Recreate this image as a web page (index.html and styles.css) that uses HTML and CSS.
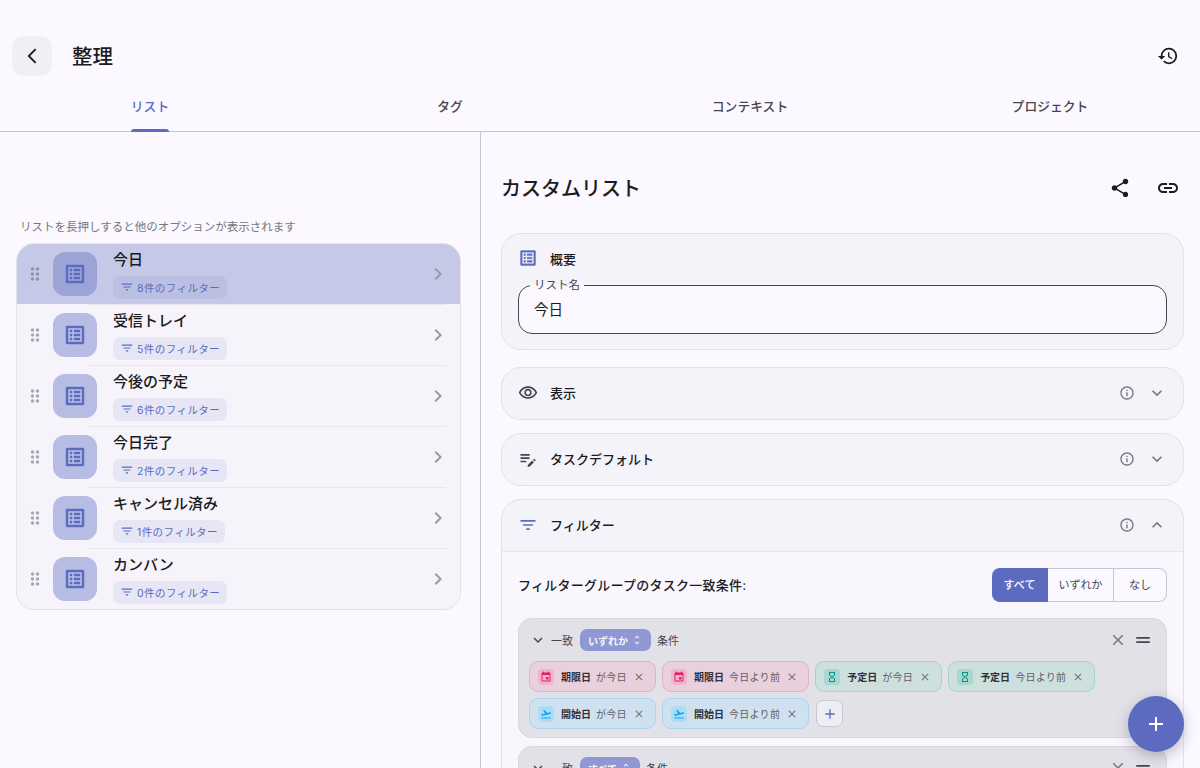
FILE: index.html
```html
<!DOCTYPE html>
<html lang="ja">
<head>
<meta charset="utf-8">
<title>整理</title>
<link rel="stylesheet" href="styles.css">
</head>
<body>
<svg class="defs" aria-hidden="true">
  <symbol id="i-history" viewBox="0 0 24 24"><path d="M13 3a9 9 0 0 0-9 9H1l3.89 3.89.07.14L9 12H6c0-3.87 3.13-7 7-7s7 3.13 7 7-3.13 7-7 7c-1.93 0-3.68-.79-4.94-2.06l-1.42 1.42A8.954 8.954 0 0 0 13 21a9 9 0 0 0 0-18zm-1 5v5l4.28 2.54.72-1.21-3.5-2.08V8H12z"/></symbol>
  <symbol id="i-back" viewBox="0 0 24 24"><path d="M17.77 3.77 16 2 6 12l10 10 1.77-1.77L9.54 12z"/></symbol>
  <symbol id="i-share" viewBox="0 0 24 24"><path d="M18 16.08c-.76 0-1.44.3-1.96.77L8.91 12.7c.05-.23.09-.46.09-.7s-.04-.47-.09-.7l7.05-4.11c.54.5 1.25.81 2.04.81 1.66 0 3-1.34 3-3s-1.34-3-3-3-3 1.34-3 3c0 .24.04.47.09.7L8.04 9.81C7.5 9.31 6.79 9 6 9c-1.66 0-3 1.34-3 3s1.34 3 3 3c.79 0 1.5-.31 2.04-.81l7.12 4.16c-.05.21-.08.43-.08.65 0 1.61 1.31 2.92 2.92 2.92s2.92-1.31 2.92-2.92-1.31-2.92-2.92-2.92z"/></symbol>
  <symbol id="i-link" viewBox="0 0 24 24"><path d="M3.9 12c0-1.71 1.39-3.1 3.1-3.1h4V7H7c-2.76 0-5 2.24-5 5s2.24 5 5 5h4v-1.9H7c-1.71 0-3.1-1.39-3.1-3.1zM8 13h8v-2H8v2zm9-6h-4v1.9h4c1.71 0 3.1 1.39 3.1 3.1s-1.39 3.1-3.1 3.1h-4V17h4c2.76 0 5-2.24 5-5s-2.24-5-5-5z"/></symbol>
  <symbol id="i-list" viewBox="0 0 24 24"><path d="M19 5v14H5V5h14m1.1-2H3.9c-.5 0-.9.4-.9.9v16.2c0 .4.4.9.9.9h16.2c.4 0 .9-.5.9-.9V3.9c0-.5-.5-.9-.9-.9zM11 7h6v2h-6V7zm0 4h6v2h-6v-2zm0 4h6v2h-6zM7 7h2v2H7zm0 4h2v2H7zm0 4h2v2H7z"/></symbol>
  <symbol id="i-eye" viewBox="0 0 24 24"><path d="M12 6c3.79 0 7.17 2.13 8.82 5.5C19.17 14.87 15.79 17 12 17s-7.17-2.13-8.82-5.5C4.83 8.13 8.21 6 12 6m0-2C7 4 2.73 7.11 1 11.5 2.73 15.89 7 19 12 19s9.27-3.11 11-7.5C21.27 7.11 17 4 12 4zm0 5c1.38 0 2.5 1.12 2.5 2.5S13.38 14 12 14s-2.5-1.12-2.5-2.5S10.62 9 12 9m0-2c-2.48 0-4.5 2.02-4.5 4.5S9.52 16 12 16s4.5-2.02 4.5-4.5S14.48 7 12 7z"/></symbol>
  <symbol id="i-note" viewBox="0 0 24 24"><path d="M3 10h11v2H3v-2zm0-2h11V6H3v2zm0 8h7v-2H3v2zm15.01-3.13.71-.71c.39-.39 1.02-.39 1.41 0l.71.71c.39.39.39 1.02 0 1.41l-.71.71-2.12-2.12zm-1.06 1.06-5.3 5.31V21.36h2.12l5.3-5.3-2.12-2.13z"/></symbol>
  <symbol id="i-filter" viewBox="0 0 24 24"><path d="M10 18h4v-2h-4v2zM3 6v2h18V6H3zm3 7h12v-2H6v2z"/></symbol>
  <symbol id="i-info" viewBox="0 0 24 24"><path d="M11 7h2v2h-2zm0 4h2v6h-2zm1-9C6.48 2 2 6.48 2 12s4.48 10 10 10 10-4.48 10-10S17.52 2 12 2zm0 18c-4.41 0-8-3.59-8-8s3.59-8 8-8 8 3.59 8 8-3.59 8-8 8z"/></symbol>
  <symbol id="i-down" viewBox="0 0 24 24"><path d="M16.59 8.59 12 13.17 7.41 8.59 6 10l6 6 6-6z"/></symbol>
  <symbol id="i-up" viewBox="0 0 24 24"><path d="M12 8l-6 6 1.41 1.41L12 10.83l4.59 4.58L18 14z"/></symbol>
  <symbol id="i-right" viewBox="0 0 24 24"><path d="M10 6 8.59 7.41 13.17 12l-4.58 4.59L10 18l6-6z"/></symbol>
  <symbol id="i-drag" viewBox="0 0 24 24"><path d="M11 18c0 1.1-.9 2-2 2s-2-.9-2-2 .9-2 2-2 2 .9 2 2zm-2-8c-1.1 0-2 .9-2 2s.9 2 2 2 2-.9 2-2-.9-2-2-2zm0-6c-1.1 0-2 .9-2 2s.9 2 2 2 2-.9 2-2-.9-2-2-2zm6 4c1.1 0 2-.9 2-2s-.9-2-2-2-2 .9-2 2 .9 2 2 2zm0 2c-1.1 0-2 .9-2 2s.9 2 2 2 2-.9 2-2-.9-2-2-2zm0 6c-1.1 0-2 .9-2 2s.9 2 2 2 2-.9 2-2-.9-2-2-2z"/></symbol>
  <symbol id="i-close" viewBox="0 0 24 24"><path d="M19 6.41 17.59 5 12 10.59 6.41 5 5 6.41 10.59 12 5 17.59 6.41 19 12 13.41 17.59 19 19 17.59 13.41 12z"/></symbol>
  <symbol id="i-add" viewBox="0 0 24 24"><path d="M19 13h-6v6h-2v-6H5v-2h6V5h2v6h6v2z"/></symbol>
  <symbol id="i-event" viewBox="0 0 24 24"><path d="M17 12h-5v5h5v-5zM16 1v2H8V1H6v2H5c-1.11 0-1.99.9-1.99 2L3 19c0 1.1.89 2 2 2h14c1.1 0 2-.9 2-2V5c0-1.1-.9-2-2-2h-1V1h-2zm3 18H5V8h14v11z"/></symbol>
  <symbol id="i-hour" viewBox="0 0 24 24"><path d="M6 2v6h.01L6 8.01 10 12l-4 4 .01.01H6V22h12v-5.99h-.01L18 16l-4-4 4-3.99-.01-.01H18V2H6zm10 14.5V20H8v-3.5l4-4 4 4zm-4-5-4-4V4h8v3.5l-4 4z"/></symbol>
  <symbol id="i-flight" viewBox="0 0 24 24"><path d="M2.5 19h19v2h-19v-2zm19.57-9.36c-.21-.8-1.04-1.28-1.84-1.06L14.92 10l-6.9-6.43-1.93.51 4.14 7.17-4.97 1.33-1.97-1.54-1.45.39 2.59 4.49s7.12-1.9 16.57-4.43c.81-.23 1.28-1.05 1.07-1.85z"/></symbol>
  <symbol id="i-unfold" viewBox="0 0 24 24"><path d="M12 5.83 15.17 9l1.41-1.41L12 3 7.41 7.59 8.83 9 12 5.83zm0 12.34L8.83 15l-1.41 1.41L12 21l4.59-4.59L15.17 15 12 18.17z"/></symbol>
  <symbol id="i-equal" viewBox="0 0 24 24"><path d="M3 8h18v2.4H3zM3 13.6h18V16H3z"/></symbol>
</svg>

<div class="app">
  <header class="topbar">
    <button class="back" type="button"><svg class="ic ic-18"><use href="#i-back"/></svg></button>
    <h1 class="page-title">整理</h1>
    <svg class="ic ic-22"><use href="#i-history"/></svg>
  </header>

  <nav class="tabs">
    <div class="tab active"><span class="tab-label">リスト</span></div>
    <div class="tab"><span class="tab-label">タグ</span></div>
    <div class="tab"><span class="tab-label">コンテキスト</span></div>
    <div class="tab"><span class="tab-label">プロジェクト</span></div>
  </nav>

  <main class="split">
    <section class="left">
      <p class="hint">リストを長押しすると他のオプションが表示されます</p>
      <div class="lists">
        <div class="row selected">
          <svg class="ic drag"><use href="#i-drag"/></svg>
          <div class="tile"><svg class="ic ic-24 bold"><use href="#i-list"/></svg></div>
          <div class="row-text"><div class="row-name">今日</div><div class="count"><svg class="ic ic-14"><use href="#i-filter"/></svg>8件のフィルター</div></div>
          <svg class="ic ic-24 go"><use href="#i-right"/></svg>
        </div>
        <div class="row">
          <svg class="ic drag"><use href="#i-drag"/></svg>
          <div class="tile"><svg class="ic ic-24 bold"><use href="#i-list"/></svg></div>
          <div class="row-text"><div class="row-name">受信トレイ</div><div class="count"><svg class="ic ic-14"><use href="#i-filter"/></svg>5件のフィルター</div></div>
          <svg class="ic ic-24 go"><use href="#i-right"/></svg>
        </div>
        <div class="row">
          <svg class="ic drag"><use href="#i-drag"/></svg>
          <div class="tile"><svg class="ic ic-24 bold"><use href="#i-list"/></svg></div>
          <div class="row-text"><div class="row-name">今後の予定</div><div class="count"><svg class="ic ic-14"><use href="#i-filter"/></svg>6件のフィルター</div></div>
          <svg class="ic ic-24 go"><use href="#i-right"/></svg>
        </div>
        <div class="row">
          <svg class="ic drag"><use href="#i-drag"/></svg>
          <div class="tile"><svg class="ic ic-24 bold"><use href="#i-list"/></svg></div>
          <div class="row-text"><div class="row-name">今日完了</div><div class="count"><svg class="ic ic-14"><use href="#i-filter"/></svg>2件のフィルター</div></div>
          <svg class="ic ic-24 go"><use href="#i-right"/></svg>
        </div>
        <div class="row">
          <svg class="ic drag"><use href="#i-drag"/></svg>
          <div class="tile"><svg class="ic ic-24 bold"><use href="#i-list"/></svg></div>
          <div class="row-text"><div class="row-name">キャンセル済み</div><div class="count"><svg class="ic ic-14"><use href="#i-filter"/></svg>1件のフィルター</div></div>
          <svg class="ic ic-24 go"><use href="#i-right"/></svg>
        </div>
        <div class="row">
          <svg class="ic drag"><use href="#i-drag"/></svg>
          <div class="tile"><svg class="ic ic-24 bold"><use href="#i-list"/></svg></div>
          <div class="row-text"><div class="row-name">カンバン</div><div class="count"><svg class="ic ic-14"><use href="#i-filter"/></svg>0件のフィルター</div></div>
          <svg class="ic ic-24 go"><use href="#i-right"/></svg>
        </div>
      </div>
    </section>

    <section class="right">
      <div class="right-head">
        <h2 class="right-title">カスタムリスト</h2>
        <svg class="ic ic-22"><use href="#i-share"/></svg>
        <svg class="ic ic-24"><use href="#i-link"/></svg>
      </div>

      <div class="card overview">
        <div class="overview-head">
          <svg class="ic ic-20 indigo bold"><use href="#i-list"/></svg>
          <span class="card-name">概要</span>
        </div>
        <fieldset class="field">
          <legend class="field-label">リスト名</legend>
          <div class="field-value">今日</div>
        </fieldset>
      </div>

      <div class="card">
        <div class="card-head">
          <svg class="ic ic-20 dark"><use href="#i-eye"/></svg>
          <span class="card-name">表示</span>
          <svg class="ic ic-16 muted"><use href="#i-info"/></svg>
          <svg class="ic ic-20 muted chev"><use href="#i-down"/></svg>
        </div>
      </div>

      <div class="card">
        <div class="card-head">
          <svg class="ic ic-20 dark"><use href="#i-note"/></svg>
          <span class="card-name">タスクデフォルト</span>
          <svg class="ic ic-16 muted"><use href="#i-info"/></svg>
          <svg class="ic ic-20 muted chev"><use href="#i-down"/></svg>
        </div>
      </div>

      <div class="card">
        <div class="card-head divided">
          <svg class="ic ic-20 indigo"><use href="#i-filter"/></svg>
          <span class="card-name">フィルター</span>
          <svg class="ic ic-16 muted"><use href="#i-info"/></svg>
          <svg class="ic ic-20 muted chev"><use href="#i-up"/></svg>
        </div>
        <div class="filter-body">
          <div class="match-row">
            <span class="match-label">フィルターグループのタスク一致条件:</span>
            <div class="segments">
              <span class="segment on">すべて</span>
              <span class="segment mid">いずれか</span>
              <span class="segment last">なし</span>
            </div>
          </div>

          <div class="group">
            <div class="group-head">
              <svg class="ic ic-18 dark"><use href="#i-down"/></svg>
              <span class="group-word">一致</span>
              <span class="pill">いずれか<svg class="ic ic-12"><use href="#i-unfold"/></svg></span>
              <span class="group-word gap">条件</span>
              <svg class="ic ic-18 muted push"><use href="#i-close"/></svg>
              <svg class="ic ic-18 dark"><use href="#i-equal"/></svg>
            </div>
            <div class="chips">
              <div class="chip pink"><span class="chip-ic"><svg class="ic ic-12"><use href="#i-event"/></svg></span><b>期限日</b><span class="chip-v">が今日</span><svg class="ic ic-12 x"><use href="#i-close"/></svg></div>
              <div class="chip pink"><span class="chip-ic"><svg class="ic ic-12"><use href="#i-event"/></svg></span><b>期限日</b><span class="chip-v">今日より前</span><svg class="ic ic-12 x"><use href="#i-close"/></svg></div>
              <div class="chip teal"><span class="chip-ic"><svg class="ic ic-12"><use href="#i-hour"/></svg></span><b>予定日</b><span class="chip-v">が今日</span><svg class="ic ic-12 x"><use href="#i-close"/></svg></div>
              <div class="chip teal"><span class="chip-ic"><svg class="ic ic-12"><use href="#i-hour"/></svg></span><b>予定日</b><span class="chip-v">今日より前</span><svg class="ic ic-12 x"><use href="#i-close"/></svg></div>
              <div class="chip blue"><span class="chip-ic"><svg class="ic ic-12"><use href="#i-flight"/></svg></span><b>開始日</b><span class="chip-v">が今日</span><svg class="ic ic-12 x"><use href="#i-close"/></svg></div>
              <div class="chip blue"><span class="chip-ic"><svg class="ic ic-12"><use href="#i-flight"/></svg></span><b>開始日</b><span class="chip-v">今日より前</span><svg class="ic ic-12 x"><use href="#i-close"/></svg></div>
              <div class="chip-add"><svg class="ic ic-16 indigo"><use href="#i-add"/></svg></div>
            </div>
          </div>

          <div class="group">
            <div class="group-head">
              <svg class="ic ic-18 dark"><use href="#i-down"/></svg>
              <span class="group-word">一致</span>
              <span class="pill">すべて<svg class="ic ic-12"><use href="#i-unfold"/></svg></span>
              <span class="group-word gap">条件</span>
              <svg class="ic ic-18 muted push"><use href="#i-close"/></svg>
              <svg class="ic ic-18 dark"><use href="#i-equal"/></svg>
            </div>
          </div>
        </div>
      </div>
    </section>
  </main>

  <button class="fab" type="button"><svg class="ic ic-24"><use href="#i-add"/></svg></button>
</div>
</body>
</html>
```
FILE: styles.css
```css
* { box-sizing: border-box; }
html, body { margin: 0; padding: 0; height: 100%; overflow: hidden; }
body {
  background: #fbf8ff;
  color: #1b1b21;
  font-family: Inter, "Noto Sans CJK JP", "Noto Sans", sans-serif;
}
.defs { display: none; }
.ic { display: block; flex: none; fill: currentColor; }
.ic-12 { width: 12px; height: 12px; }
.ic-14 { width: 14px; height: 14px; }
.ic-16 { width: 16px; height: 16px; }
.ic-18 { width: 18px; height: 18px; }
.ic-20 { width: 20px; height: 20px; }
.ic-22 { width: 22px; height: 22px; }
.ic-24 { width: 24px; height: 24px; }
.bold { stroke: currentColor; stroke-width: .45; }
.indigo { color: #5c6bc0; }
.dark { color: #45464f; }
.muted { color: #75767f; }

.app { position: relative; width: 1200px; height: 768px; overflow: hidden; display: flex; flex-direction: column; }

.topbar { flex: none; height: 88px; padding: 36px 21px 12px 12px; display: flex; align-items: center; }
.back { width: 40px; height: 40px; border: 0; border-radius: 12px; background: #eff0f5; color: #1b1b21; display: flex; align-items: center; justify-content: center; padding: 0; }
.page-title { margin: 0 0 0 20px; padding-top: 1px; font-size: 20.5px; font-weight: 500; line-height: 40px; flex: 1; }

.tabs { flex: none; height: 44px; display: grid; grid-template-columns: repeat(4, 1fr); border-bottom: 1px solid #c6c5d0; }
.tab { display: flex; justify-content: center; align-items: center; font-size: 12.8px; font-weight: 500; color: #45464f; padding-bottom: 6px; }
.tab-label { position: relative; display: block; line-height: 20px; }
.tab.active { color: #5c6bc0; }
.tab.active .tab-label::after { content: ""; position: absolute; left: 0; right: 0; bottom: -15px; height: 3px; background: #5c6bc0; border-radius: 3px 3px 0 0; }

.split { flex: 1; min-height: 0; display: flex; }
.left { flex: none; width: 481px; border-right: 1px solid #c6c5d0; padding: 87px 19px 0 16px; }
.hint { margin: 0 0 7px 4px; font-size: 11.5px; line-height: 17px; color: #75767f; }
.lists { border: 1px solid #e4e2e9; border-radius: 18px; overflow: hidden; background: #f6f3fb; }
.row { position: relative; height: 61px; display: flex; align-items: center; padding: 1px 10px 0 8px; }
.row + .row::before { content: ""; position: absolute; top: 0; left: 72px; right: 14px; height: 1px; background: #e6e4ec; }
.row.selected { background: #c5c9e7; height: 60px; padding-top: 0; }
.drag { width: 20px; height: 20px; color: #a6a6b0; }
.row.selected .drag { color: #8f92a8; }
.tile { flex: none; width: 44px; height: 44px; margin-left: 8px; border-radius: 12px; background: #b6bce3; color: #5c6bc0; display: flex; align-items: center; justify-content: center; }
.row.selected .tile { background: #9ca4d6; }
.row-text { flex: 1; margin-left: 16px; }
.row-name { font-size: 15px; font-weight: 500; line-height: 20px; color: #1b1b21; }
.count { display: inline-flex; align-items: center; gap: 3px; height: 23px; margin-top: 6px; padding: 0 7px; border-radius: 7px; background: #e6e6f5; color: #5c6bc0; font-size: 10.5px; letter-spacing: .04em; vertical-align: top; }
.row.selected .count { background: #bbbfe1; }
.go { color: #9a9ba3; }

.right { flex: 1; min-width: 0; padding: 36px 16px 0 20px; }
.right-head { display: flex; align-items: center; gap: 25px; height: 40px; padding-right: 4px; margin-bottom: 25px; }
.right-title { margin: 0; padding-top: 1px; flex: 1; font-size: 20px; font-weight: 500; line-height: 40px; }

.card { border: 1px solid #e2e0e8; border-radius: 20px; background: #f5f3fa; margin-bottom: 13px; }
.card.overview { margin-bottom: 17px; padding: 0 16px; height: 117px; }
.overview-head { display: flex; align-items: center; height: 45px; padding-top: 3px; }
.overview-head .card-name { margin-left: 12px; }
.card-name { font-size: 13px; font-weight: 500; flex: 1; }
.card-head { height: 51px; display: flex; align-items: center; padding: 0 16px 2px 16px; }
.card-head .card-name { margin-left: 12px; }
.card-head.divided { height: 52px; border-bottom: 1px solid #e6e4ec; }
.chev { margin-left: 12px; }

.field { margin: 0; padding: 0 15px; height: 55px; border: 1px solid #45464f; border-radius: 14px; background: #fbf8ff; min-width: 0; }
.field-label { padding: 0 4px; margin-left: -4px; font-size: 11.5px; line-height: 13px; color: #45464f; }
.field-value { font-size: 14.5px; line-height: 24px; margin-top: 6px; }

.filter-body { padding: 16px 16px 0; background: #f9f6fe; }
.match-row { display: flex; align-items: center; justify-content: space-between; height: 34px; margin-bottom: 16px; }
.match-label { padding-bottom: 2px; font-size: 13px; font-weight: 500; letter-spacing: .25px; }
.segments { display: flex; height: 34px; font-size: 11px; }
.segment { display: flex; align-items: center; justify-content: center; padding-bottom: 2px; border: 1px solid #c9c8d2; border-left: 0; color: #45464f; background: #fbf8ff; }
.segment.on { width: 56px; background: #5c6bc0; border-color: #5c6bc0; border-radius: 8px 0 0 8px; color: #fff; font-weight: 500; }
.segment.mid { width: 66px; }
.segment.last { width: 53px; border-radius: 0 8px 8px 0; }

.group { border: 1px solid #d8d7de; border-radius: 14px; background: #e3e1e8; padding: 0 10px 8px; margin-bottom: 8px; }
.group-head { height: 42px; display: flex; align-items: center; padding: 0 4px 0 0; font-size: 11px; color: #45464f; }
.group-word { margin-left: 4px; }
.group-word.gap { margin-left: 6px; }
.pill { display: inline-flex; align-items: center; gap: 3px; height: 22px; margin-left: 7px; padding: 0 8px; border-radius: 7px; background: #8f98d3; color: #f4f4fc; font-size: 10px; font-weight: 700; }
.push { margin-left: auto; margin-right: 7px; }

.chips { display: flex; flex-wrap: wrap; gap: 6px; align-items: center; padding-right: 40px; }
.chip { display: flex; align-items: center; height: 31px; padding: 0 10px 0 8px; border: 1px solid; border-radius: 9px; font-size: 10px; color: #5e5f68; }
.chip b { margin-left: 7px; color: #30313a; font-weight: 700; }
.chip-v { margin-left: 5px; letter-spacing: .3px; }
.x { margin-left: 6px; color: #6f7079; }
.chip-ic { flex: none; width: 16px; height: 16px; border-radius: 4px; display: flex; align-items: center; justify-content: center; }
.pink { background: #e9d0dd; border-color: #e8aec6; }
.pink .chip-ic { background: #eeb5cc; color: #e91e63; }
.teal { background: #cde0de; border-color: #a3d4cd; }
.teal .chip-ic { background: #a9d6cf; color: #009688; }
.blue { background: #cfe1ef; border-color: #a6d6f0; }
.blue .chip-ic { background: #aedcf5; color: #03a9f4; }
.chip-add { width: 27px; height: 27px; margin-left: 1px; border: 1px solid #c9c8d2; border-radius: 7px; background: #eeedf3; display: flex; align-items: center; justify-content: center; }

.fab { position: absolute; left: 1128px; top: 696px; width: 56px; height: 56px; border: 0; padding: 0; border-radius: 50%; background: #5c6bc0; color: #fff; display: flex; align-items: center; justify-content: center; box-shadow: 0 4px 14px rgba(30, 30, 70, .28); }
```
